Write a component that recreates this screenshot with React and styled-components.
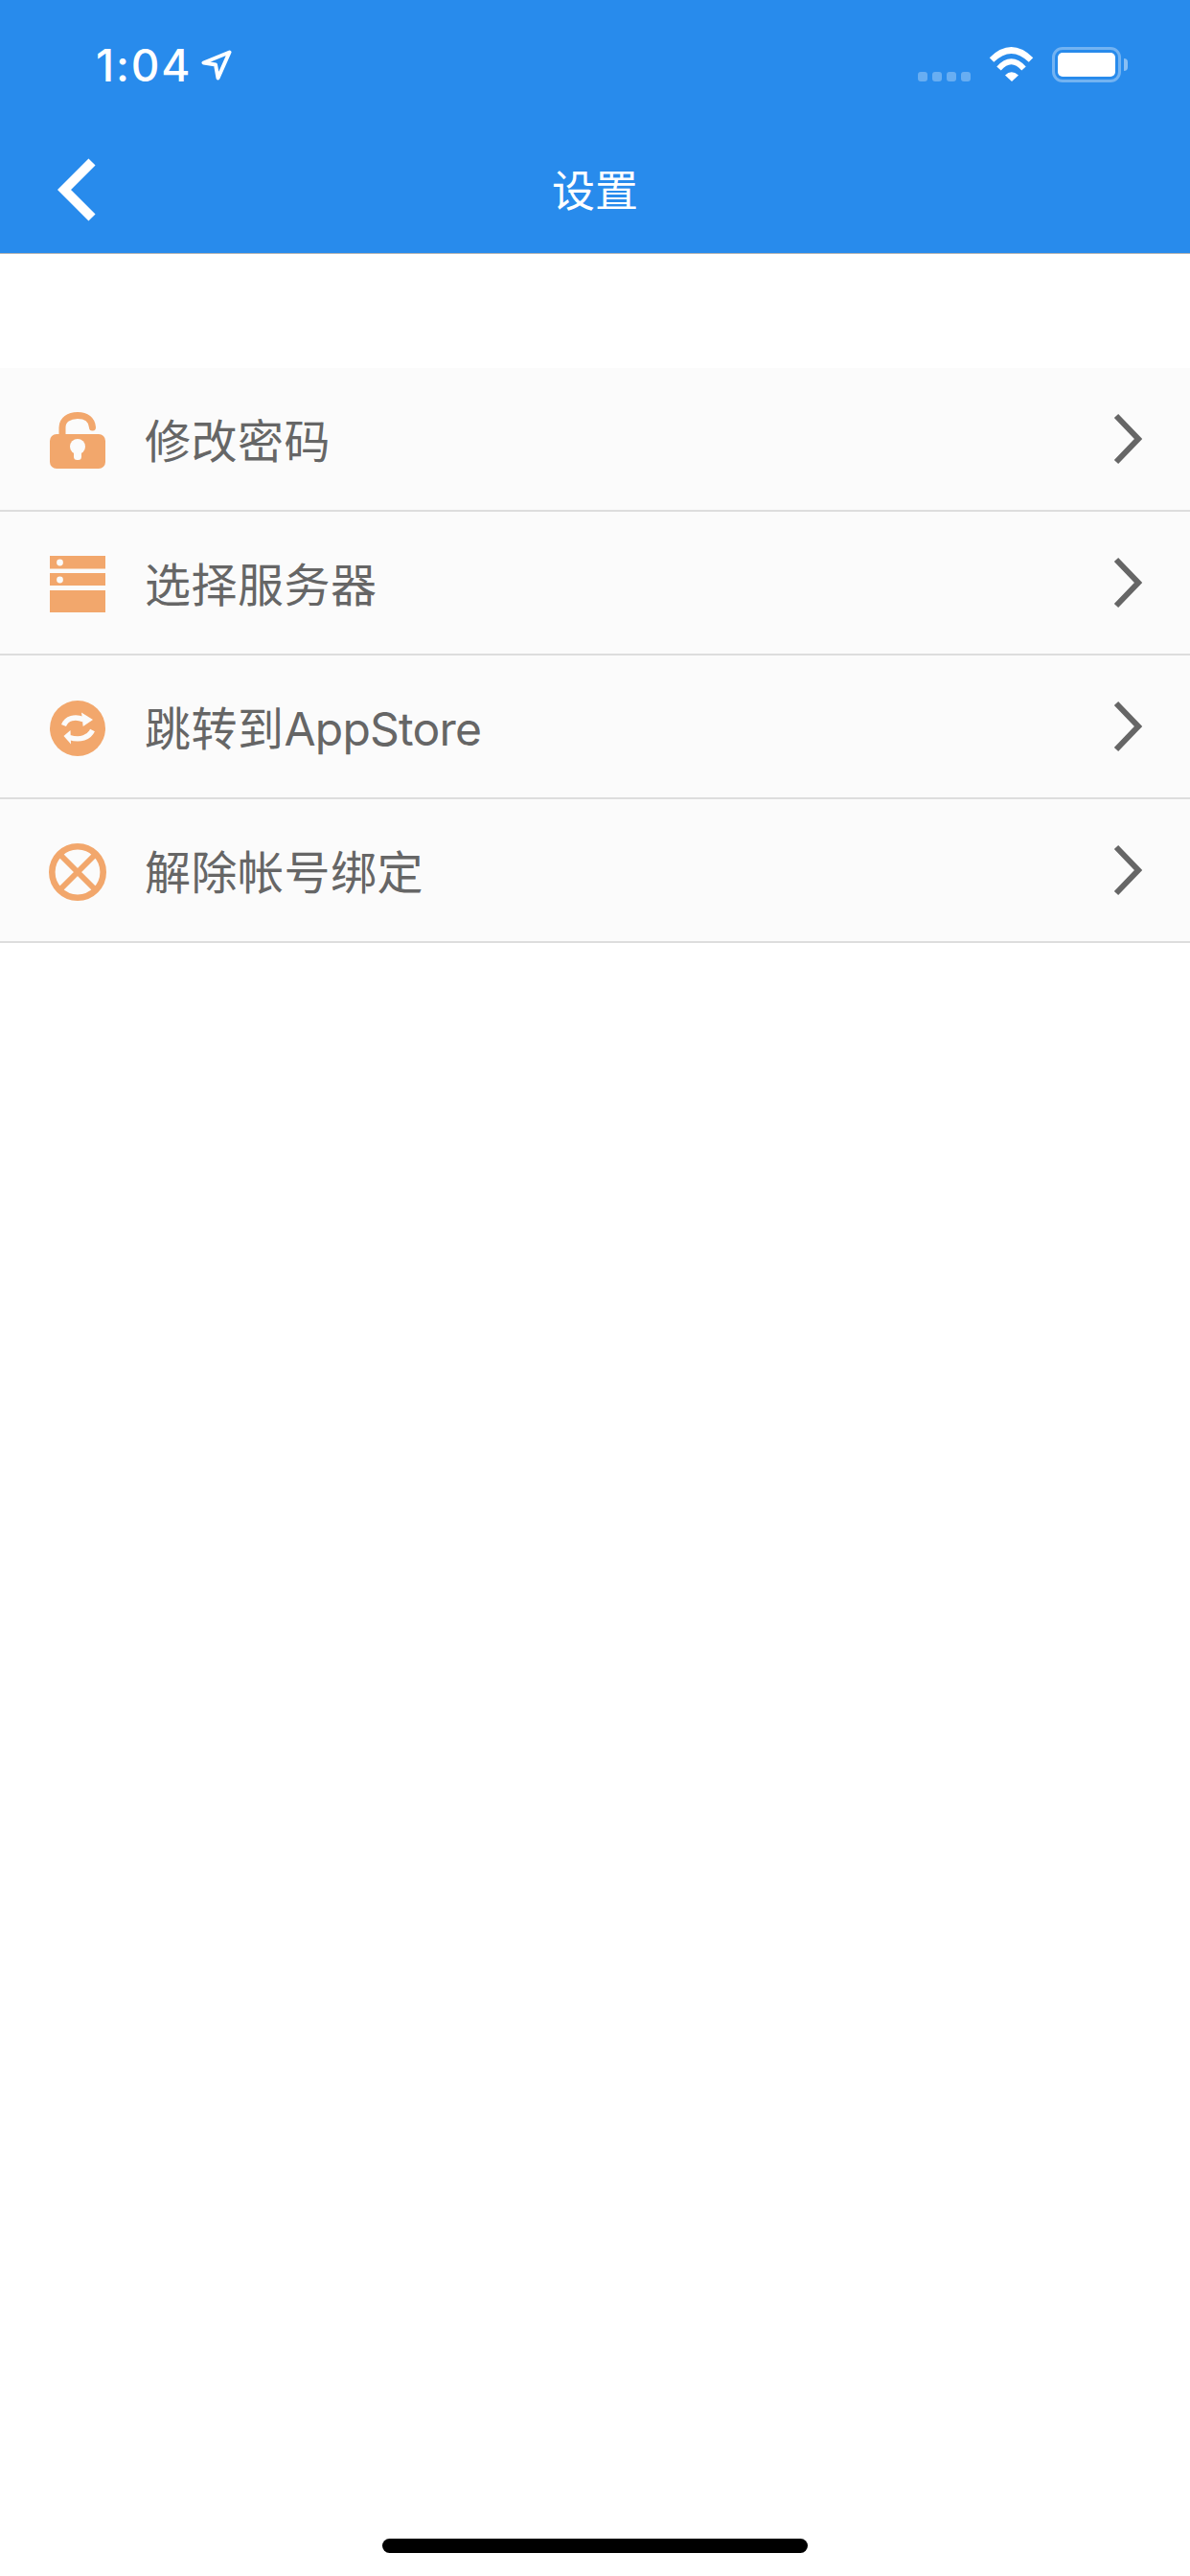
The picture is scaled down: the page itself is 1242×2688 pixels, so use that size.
import React from 'react';
import styled, { createGlobalStyle } from 'styled-components';

const ORANGE = '#f2a76c';
const ROW_BG = '#fbfbfb';

const GlobalStyle = createGlobalStyle`
  html, body {
    margin: 0;
    padding: 0;
    background: #fff;
  }
  body {
    font-family: Inter, "Noto Sans CJK SC", sans-serif;
  }
`;

const LockIcon = () => (
  <svg width="58" height="60" viewBox="0 0 58 60">
    <path d="M13 26V16C13 8 20 3.5 29 3.5C38 3.5 44 8 44.5 16" fill="none" stroke={ORANGE} strokeWidth="7" strokeLinecap="round" />
    <rect x="0" y="23" width="58" height="36" rx="7" fill={ORANGE} />
    <circle cx="29" cy="36" r="8" fill={ROW_BG} />
    <rect x="25" y="38" width="8" height="12" rx="3.5" fill={ROW_BG} />
  </svg>
);

const ServerIcon = () => (
  <svg width="58" height="60" viewBox="0 0 58 60">
    <rect x="0" y="0" width="58" height="13.5" fill={ORANGE} />
    <rect x="0" y="18" width="58" height="13" fill={ORANGE} />
    <rect x="0" y="36" width="58" height="23" fill={ORANGE} />
    <circle cx="10.5" cy="7" r="3.4" fill={ROW_BG} />
    <circle cx="10.5" cy="25" r="3.4" fill={ROW_BG} />
  </svg>
);

const RefreshIcon = () => (
  <svg width="58" height="58" viewBox="0 0 58 58">
    <circle cx="29" cy="29" r="29" fill={ORANGE} />
    <path d="M14.5 26C17.5 18.5 26 16 35 19.8" fill="none" stroke={ROW_BG} strokeWidth="5.4" />
    <path d="M33 12.5L45 20L34.7 27Z" fill={ROW_BG} />
    <path d="M44.5 31C41 38.5 32 42 20.5 38.5" fill="none" stroke={ROW_BG} strokeWidth="5.4" />
    <path d="M21.5 31L14.5 37L22 45.5Z" fill={ROW_BG} />
  </svg>
);

const CancelIcon = () => (
  <svg width="60" height="60" viewBox="0 0 60 60">
    <circle cx="30" cy="30" r="26.7" fill="none" stroke={ORANGE} strokeWidth="6.6" />
    <path d="M11 11L49 49M49 11L11 49" stroke={ORANGE} strokeWidth="6" />
  </svg>
);

const LocationIcon = () => (
  <svg width="32" height="32" viewBox="0 0 32 32">
    <path d="M29.5 2.5L2.5 13.5L15 15.5L17.5 29.5Z" fill="none" stroke="#fff" strokeWidth="4" strokeLinejoin="round" />
  </svg>
);

const WifiIcon = () => (
  <svg width="47" height="36" viewBox="0 0 47 36">
    <path d="M3 13.5Q23.5 -6.5 44 13.5" fill="none" stroke="#fff" strokeWidth="6.4" />
    <path d="M10.5 22.5Q23.5 8 36.5 22.5" fill="none" stroke="#fff" strokeWidth="6" />
    <path d="M17 29.5Q23.5 23 31 29.5L24 36Z" fill="#fff" />
  </svg>
);

const items = [
  { label: '修改密码', Icon: LockIcon },
  { label: '选择服务器', Icon: ServerIcon },
  { label: '跳转到', latin: 'AppStore', Icon: RefreshIcon },
  { label: '解除帐号绑定', Icon: CancelIcon },
];

const App = () => (
  <Page>
    <GlobalStyle />
    <Header>
      <StatusBar>
        <Clock>
          <Time>1:04</Time>
          <LocationIcon />
        </Clock>
        <SignalDots>
          <Dot />
          <Dot />
          <Dot />
          <Dot />
        </SignalDots>
        <WifiSlot>
          <WifiIcon />
        </WifiSlot>
        <Battery>
          <BatteryFill />
        </Battery>
        <BatteryNub />
      </StatusBar>
      <NavBar>
        <BackButton>
          <svg width="40" height="66" viewBox="0 0 40 66">
            <path d="M36 4L7 33L36 62" fill="none" stroke="#fff" strokeWidth="10" />
          </svg>
        </BackButton>
        <Title>设置</Title>
      </NavBar>
    </Header>
    <List>
      {items.map(({ label, latin, Icon }) => (
        <Row key={label}>
          <IconSlot>
            <Icon />
          </IconSlot>
          <Label>
            {label}
            {latin && <Latin>{latin}</Latin>}
          </Label>
          <svg width="30" height="54" viewBox="0 0 30 54">
            <path d="M3 3L26 27L3 51" fill="none" stroke="#666" strokeWidth="6" />
          </svg>
        </Row>
      ))}
    </List>
    <HomeBar />
  </Page>
);

export default App;

const Page = styled.div`
  width: 1242px;
  height: 2688px;
  display: flex;
  flex-direction: column;
  background: #fff;
  overflow: hidden;
`;

const Header = styled.header`
  height: 264px;
  background: #288bec;
  border-bottom: 1px solid #b4b4b4;
  display: flex;
  flex-direction: column;
`;

const StatusBar = styled.div`
  height: 132px;
  box-sizing: border-box;
  padding: 49px 65px 0 100px;
  display: flex;
  align-items: flex-start;
`;

const Clock = styled.div`
  display: flex;
  align-items: center;
  gap: 10px;
  margin-top: 3px;
  margin-right: auto;
`;

const Time = styled.span`
  font-size: 46px;
  line-height: 32px;
  font-weight: 500;
  color: #fff;
  letter-spacing: 1.8px;
`;

const SignalDots = styled.div`
  display: flex;
  gap: 5px;
  margin-top: 26px;
`;

const Dot = styled.span`
  width: 10px;
  height: 10px;
  border-radius: 3px;
  background: rgba(255, 255, 255, 0.3);
`;

const WifiSlot = styled.div`
  display: flex;
  margin-left: 19px;
`;

const Battery = styled.div`
  width: 72px;
  height: 37px;
  box-sizing: border-box;
  margin-left: 19px;
  padding: 3px;
  border: 3px solid rgba(255, 255, 255, 0.35);
  border-radius: 11px;
`;

const BatteryFill = styled.div`
  height: 100%;
  background: #fff;
  border-radius: 5px;
`;

const BatteryNub = styled.div`
  width: 4px;
  height: 13px;
  margin: 12px 0 0 3px;
  background: rgba(255, 255, 255, 0.45);
  border-radius: 0 4px 4px 0;
`;

const NavBar = styled.nav`
  position: relative;
  height: 132px;
  display: flex;
  align-items: center;
  justify-content: center;
`;

const BackButton = styled.div`
  position: absolute;
  left: 60px;
  top: 33px;
  display: flex;
`;

const Title = styled.h1`
  margin: 0 0 4px;
  font-size: 45px;
  font-weight: 400;
  color: #fff;
`;

const List = styled.div`
  margin-top: 119px;
  display: flex;
  flex-direction: column;
`;

const Row = styled.div`
  height: 150px;
  box-sizing: border-box;
  padding: 0 50px 0 51px;
  display: flex;
  align-items: center;
  background: ${ROW_BG};
  border-bottom: 2px solid #dddddd;
`;

const IconSlot = styled.div`
  width: 60px;
  display: flex;
  justify-content: center;
  margin: 3px 40px 0 0;
`;

const Label = styled.span`
  flex: 1;
  padding-bottom: 2px;
  font-size: 48px;
  letter-spacing: 0.5px;
  color: #666;
`;

const Latin = styled.span`
  letter-spacing: -0.8px;
`;

const HomeBar = styled.div`
  width: 444px;
  height: 15px;
  margin: auto auto 24px;
  border-radius: 8px;
  background: #000;
`;
